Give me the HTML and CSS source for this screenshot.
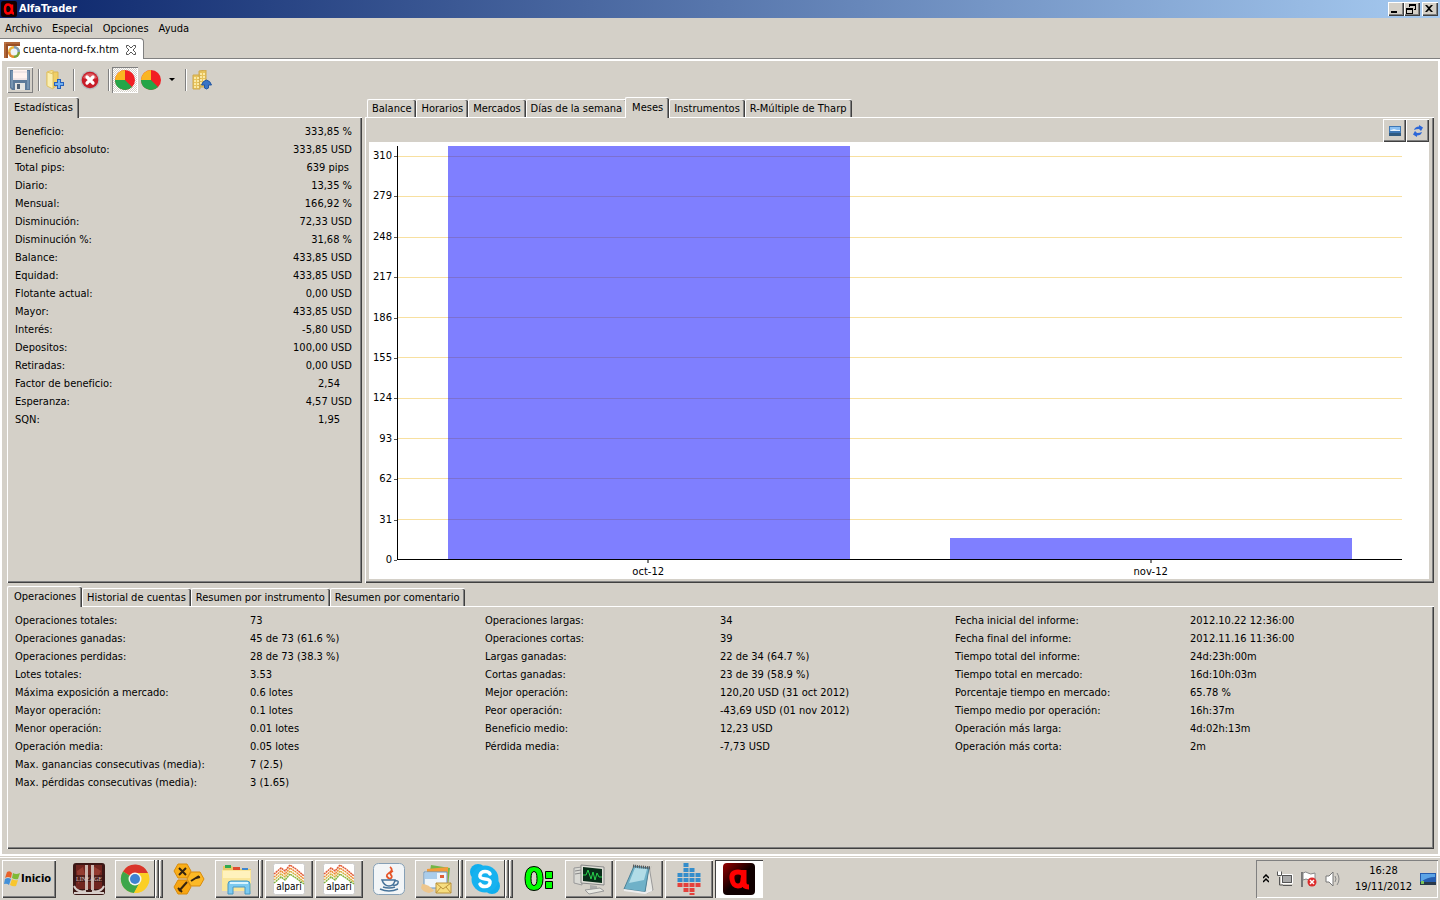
FILE: index.html
```html
<!DOCTYPE html>
<html lang="es">
<head>
  <meta charset="UTF-8">
  <title>AlfaTrader</title>
  <link rel="stylesheet" href="styles.css">
</head>
<body>

  <header class="titlebar">
    <svg class="title-icon" viewBox="0 0 16 16"><rect width="16" height="16" rx="2" fill="#100"/><path d="M11 3.5V10q0 2.500 2 2.500M11 8q-1 4.500-4 4.500T4 8t3-4.500T11 8" fill="none" stroke="#f00" stroke-width="2.500"/></svg>
    <h1>AlfaTrader</h1>
    <div class="window-buttons">
      <button aria-label="Minimizar"><svg viewBox="0 0 12 10"><path d="M2 7h6v2H2z"/></svg></button>
      <button aria-label="Restaurar"><svg viewBox="0 0 12 10"><path d="M4 0h7v6H9V5h1V2H5v1H4zM1 4h7v6H1zM2 6v3h5V6z" fill-rule="evenodd"/></svg></button>
      <button class="close" aria-label="Cerrar"><svg viewBox="0 0 12 10"><path d="M2 1h2l2 2 2-2h2L7 4.500 10 8H8L6 6 4 8H2l3-3.500z"/></svg></button>
    </div>
  </header>

  <nav class="menubar">
    <button>Archivo</button>
    <button>Especial</button>
    <button>Opciones</button>
    <button>Ayuda</button>
  </nav>

  <div class="file-tabs">
    <div class="file-tab">
      <svg class="icon16" viewBox="0 0 16 16"><path d="M0 0h16v4H4v12H0z" fill="#9a4f25"/><path d="M0 1h16M1 0v16" stroke="#c9814f"/><circle cx="10" cy="10" r="6" fill="#e9b53c"/><path d="M10 10V4a6 6 0 0 1 6 6z" fill="#7d9cb8"/><path d="M10 10h6a6 6 0 0 1-6 6z" fill="#78a43b"/><path d="M10 10v6a6 6 0 0 1-6-6z" fill="#e48a32"/><circle cx="10" cy="10" r="3.500" fill="#eef3f8"/></svg>
      <span>cuenta-nord-fx.htm</span>
      <button class="tab-close" aria-label="Cerrar pestaña"><svg viewBox="0 0 12 12"><path d="M1.500 1.500h2L6 4l2.500-2.500h2v2L8 6l2.500 2.500v2h-2L6 8l-2.500 2.500h-2v-2L4 6 1.500 3.500z" fill="#fff" stroke="#555"/></svg></button>
    </div>
  </div>

  <main class="workspace">
    <div class="toolbar">
      <button class="tool raised" aria-label="Guardar"><svg viewBox="0 0 20 20"><path d="M0 0h20v20H2l-2-2z" fill="#5c7a9a"/><path d="M1 1h2v17H2l-1-1zM17 1h2v18h-2z" fill="#7795b2"/><path d="M3 0h14v10H3z" fill="#fff3ef"/><path d="M3 2h14M3 9h14" stroke="#e2d8dc"/><path d="M5 13h10v7H5z" fill="#e4e4e2"/><path d="M7 14h3v5H7z" fill="#4f6175"/></svg></button>
      <span class="divider"></span>
      <button class="tool" aria-label="Añadir"><svg viewBox="0 0 20 20"><path d="M2 2l6-2v16l-6-1z" fill="#f7e08a" stroke="#e6c566"/><path d="M8 2h5v13l-5 3z" fill="#f1cf65" stroke="#d9b552"/><path d="M2 2l6 2v15l-6-3z" fill="#fbefb0" stroke="#dfc366"/><path d="M12 9h4v3h3v4h-3v3h-4v-3H9v-4h3z" fill="#2560bb"/><path d="M13 10h2v3h3v2h-3v3h-2v-3h-3v-2h3z" fill="#72b0f0"/></svg></button>
      <span class="divider"></span>
      <button class="tool" aria-label="Eliminar"><svg viewBox="0 0 20 20"><circle cx="10" cy="10" r="9.500" fill="#b7bbbd"/><circle cx="10" cy="10" r="8.300" fill="#c81d29"/><path d="M3 8a7.500 7.500 0 0 1 14 0q-7 3-14 0z" fill="#dd5a60"/><path d="M7 7l6 6m0-6l-6 6" stroke="#fff" stroke-width="3.200" stroke-linecap="round"/></svg></button>
      <span class="divider"></span>
      <button class="tool pressed" aria-label="Gráfico circular"><svg viewBox="0 0 20 20"><circle cx="10" cy="10" r="10" fill="#f21e23"/><path d="M10 10L17 17A10 10 0 0 1 0 10z" fill="#24a548"/><path d="M10 10H0A10 10 0 0 1 10 0z" fill="#fab521"/></svg></button>
      <button class="tool" aria-label="Tipo de gráfico"><svg viewBox="0 0 20 20"><circle cx="10" cy="10" r="10" fill="#f21e23"/><path d="M10 10L17 17A10 10 0 0 1 0 10z" fill="#24a548"/><path d="M10 10H0A10 10 0 0 1 10 0z" fill="#fab521"/></svg></button>
      <button class="drop" aria-label="Más gráficos"><svg viewBox="0 0 6 4"><path d="M0 0h6L3 3z"/></svg></button>
      <span class="divider"></span>
      <button class="tool" aria-label="Cuentas"><svg viewBox="0 0 20 20"><path d="M7 1l7-1v17H7zM1 5h7v14H1z" fill="#e7c35b" stroke="#cfa94c"/><path d="M9 3v12M12 3v12M3 7v11M6 7v11" stroke="#fae9a4" stroke-width="2" stroke-dasharray="2 1"/><path d="M14.500 10q4 1 5 5h-3v3q-2 2-4 0v-3h-3q1-4 5-5z" fill="#3974c5" stroke="#2457a1"/></svg></button>
    </div>

    <div class="upper">
      <section class="stats">
        <div class="tabs">
          <button class="tab selected">Estadísticas</button>
        </div>
        <div class="panel">
          <table class="stats-table">
            <tr><th>Beneficio:</th><td>333,85 %</td></tr>
            <tr><th>Beneficio absoluto:</th><td>333,85 USD</td></tr>
            <tr><th>Total pips:</th><td class="pips">639 pips</td></tr>
            <tr><th>Diario:</th><td>13,35 %</td></tr>
            <tr><th>Mensual:</th><td>166,92 %</td></tr>
            <tr><th>Disminución:</th><td>72,33 USD</td></tr>
            <tr><th>Disminución %:</th><td>31,68 %</td></tr>
            <tr><th>Balance:</th><td>433,85 USD</td></tr>
            <tr><th>Equidad:</th><td>433,85 USD</td></tr>
            <tr><th>Flotante actual:</th><td>0,00 USD</td></tr>
            <tr><th>Mayor:</th><td>433,85 USD</td></tr>
            <tr><th>Interés:</th><td>-5,80 USD</td></tr>
            <tr><th>Depositos:</th><td>100,00 USD</td></tr>
            <tr><th>Retiradas:</th><td>0,00 USD</td></tr>
            <tr><th>Factor de beneficio:</th><td class="plain">2,54</td></tr>
            <tr><th>Esperanza:</th><td>4,57 USD</td></tr>
            <tr><th>SQN:</th><td class="plain">1,95</td></tr>
          </table>
        </div>
      </section>

      <section class="graphs">
        <div class="tabs">
          <button class="tab">Balance</button>
          <button class="tab">Horarios</button>
          <button class="tab">Mercados</button>
          <button class="tab">Días de la semana</button>
          <button class="tab selected">Meses</button>
          <button class="tab">Instrumentos</button>
          <button class="tab">R-Múltiple de Tharp</button>
        </div>
        <div class="panel graph-panel">
          <div class="graph-tools">
            <button aria-label="Guardar imagen"><svg viewBox="0 0 12 12"><path d="M0 1h12v10H0z" fill="#3f78b5"/><path d="M1 2h10v4H1z" fill="#8cc0f2"/><path d="M2 5l3-1 3 1h3v1H1z" fill="#e5f2fd"/><path d="M0 8h12v3H0z" fill="#315b80"/></svg></button>
            <button aria-label="Actualizar"><svg viewBox="0 0 12 12"><path d="M2 5q1-3.500 5-3.500V0l4 2.500L9 6 7 4Q4 4 2 5zM10 7q-1 3.500-5 3.500V12L1 9.500 3 6l2 2q3 0 5-1z" fill="#2c67d8"/></svg></button>
          </div>
          <div class="chart">
            <div class="y-axis">
              <span></span>
              <span>310</span>
              <span>279</span>
              <span>248</span>
              <span>217</span>
              <span>186</span>
              <span>155</span>
              <span>124</span>
              <span>93</span>
              <span>62</span>
              <span>31</span>
              <span>0</span>
            </div>
            <div class="plot">
              <div class="gridlines">
                <i></i><i></i><i></i><i></i><i></i><i></i><i></i><i></i><i></i><i></i><i></i>
              </div>
              <div class="bars">
                <div class="month"><div class="bar" style="height: 100%"></div></div>
                <div class="month"><div class="bar" style="height: 5%"></div></div>
              </div>
            </div>
            <div class="x-axis">
              <span>oct-12</span>
              <span>nov-12</span>
            </div>
          </div>
        </div>
      </section>
    </div>

    <section class="operations">
      <div class="tabs">
        <button class="tab selected">Operaciones</button>
        <button class="tab">Historial de cuentas</button>
        <button class="tab">Resumen por instrumento</button>
        <button class="tab">Resumen por comentario</button>
      </div>
      <div class="panel operations-panel">
        <table class="ops-table">
          <tr><th>Operaciones totales:</th><td>73</td></tr>
          <tr><th>Operaciones ganadas:</th><td>45 de 73 (61.6 %)</td></tr>
          <tr><th>Operaciones perdidas:</th><td>28 de 73 (38.3 %)</td></tr>
          <tr><th>Lotes totales:</th><td>3.53</td></tr>
          <tr><th>Máxima exposición a mercado:</th><td>0.6 lotes</td></tr>
          <tr><th>Mayor operación:</th><td>0.1 lotes</td></tr>
          <tr><th>Menor operación:</th><td>0.01 lotes</td></tr>
          <tr><th>Operación media:</th><td>0.05 lotes</td></tr>
          <tr><th>Max. ganancias consecutivas (media):</th><td>7 (2.5)</td></tr>
          <tr><th>Max. pérdidas consecutivas (media):</th><td>3 (1.65)</td></tr>
        </table>
        <table class="ops-table">
          <tr><th>Operaciones largas:</th><td>34</td></tr>
          <tr><th>Operaciones cortas:</th><td>39</td></tr>
          <tr><th>Largas ganadas:</th><td>22 de 34 (64.7 %)</td></tr>
          <tr><th>Cortas ganadas:</th><td>23 de 39 (58.9 %)</td></tr>
          <tr><th>Mejor operación:</th><td>120,20 USD (31 oct 2012)</td></tr>
          <tr><th>Peor operación:</th><td>-43,69 USD (01 nov 2012)</td></tr>
          <tr><th>Beneficio medio:</th><td>12,23 USD</td></tr>
          <tr><th>Pérdida media:</th><td>-7,73 USD</td></tr>
        </table>
        <table class="ops-table">
          <tr><th>Fecha inicial del informe:</th><td>2012.10.22 12:36:00</td></tr>
          <tr><th>Fecha final del informe:</th><td>2012.11.16 11:36:00</td></tr>
          <tr><th>Tiempo total del informe:</th><td>24d:23h:00m</td></tr>
          <tr><th>Tiempo total en mercado:</th><td>16d:10h:03m</td></tr>
          <tr><th>Porcentaje tiempo en mercado:</th><td>65.78 %</td></tr>
          <tr><th>Tiempo medio por operación:</th><td>16h:37m</td></tr>
          <tr><th>Operación más larga:</th><td>4d:02h:13m</td></tr>
          <tr><th>Operación más corta:</th><td>2m</td></tr>
        </table>
      </div>
    </section>
  </main>

  <footer class="taskbar">
    <button class="start">
      <svg class="icon16" viewBox="0 0 16 16"><path d="M3 1q3-2 5 1L7 7Q4 5 1 7z" fill="#e8622a"/><path d="M9 2q3 2 7 0l-2 6q-3 1-6-1z" fill="#7fba35"/><path d="M1 8q3-2 6 0l-2 6q-2-2-5-1z" fill="#4390d8"/><path d="M8 8q3 2 6 1l-2 6q-3 1-6-1z" fill="#f8c62d"/></svg>
      Inicio
    </button>
    <div class="tasks">
      <button class="task flat" aria-label="Lineage II"><svg viewBox="0 0 32 32"><rect width="32" height="32" rx="3" fill="#3b1715"/><path d="M3 2h26v24H3z" fill="#70251f"/><path d="M4 8l6-4 2 8-7 9zM20 3l8 5-4 8-5 6z" fill="#943c31"/><path d="M0 12h32v7H0z" fill="#381514" opacity=".7"/><path d="M12 2h3v25h-3zM18 2h3v25h-3z" fill="#cbb5ae"/><path d="M1 23q3 7 12 5M31 23q-3 7-12 5M1 30h30" fill="none" stroke="#d7cdc9" stroke-width="2"/><text x="16" y="18" class="lineage-text">LINEAGE</text></svg></button>
      <button class="task" aria-label="Chrome"><svg viewBox="0 0 32 32"><circle cx="16" cy="16" r="14" fill="#fc3"/><path d="M16 16L4 8.500A14 14 0 0 1 29 10H16z" fill="#d9352b"/><path d="M4 8.500A14 14 0 0 0 15 30l6-11-5-3z" fill="#3da64a"/><path d="M15 30A14 14 0 0 0 29 10H16l5 9z" fill="#fbcf24"/><circle cx="16" cy="16" r="6.500" fill="#f5f5f2"/><circle cx="16" cy="16" r="5" fill="#3d82d2"/></svg><i class="stack"></i><i class="stack"></i></button>
      <button class="task flat" aria-label="Herramientas"><svg viewBox="0 0 32 32"><g stroke="#d98b0b"><path d="M5 1h9l4 7-4 7H5L1 8z" fill="#f9ae18"/><path d="M18 9h9l4 7-4 7h-9l-4-7z" fill="#fcb926"/><path d="M5 17h9l4 7-4 7H5l-4-7z" fill="#f7a511"/></g><path d="M6 5l7 7m0-7l-7 7M6 28l8-9M5 25l4 4M18 18l8-5M23 15l4-1" stroke="#352410" stroke-width="2"/></svg></button>
      <button class="task" aria-label="Explorador"><svg viewBox="0 0 32 32"><path d="M2 3h9l2 3h17v21H2z" fill="#e6c868"/><path d="M4 2h6v3H4z" fill="#2eaa50"/><path d="M12 4h7v3h-7z" fill="#e04b30"/><path d="M21 5h6v3h-6z" fill="#3d86cf"/><path d="M1 7h29v21H1z" fill="#fae69a"/><path d="M2 8h27v7H2z" fill="#fff2bc"/><path d="M7 31V21q0-3 3-3h16q3 0 3 3v10h-5v-7H12v7z" fill="#7ccaf0" stroke="#4698c4"/><path d="M9 20h18" stroke="#d9f5ff" stroke-width="2"/></svg><i class="stack"></i></button>
      <button class="task" aria-label="Alpari"><svg viewBox="0 0 32 32"><rect x=".5" y=".5" width="31" height="31" rx="2" fill="#fff" stroke="#ccc"/><g fill="none" stroke-width="1.500" stroke-dasharray="2 .5"><path d="M1 11l7-6 4 3 5-6 6 4 8 7" stroke="#e25a35"/><path d="M1 14l7-6 4 3 5-6 6 4 8 7" stroke="#ec8a34"/><path d="M1 17l7-6 4 3 5-6 6 4 8 7" stroke="#d7af3c"/><path d="M1 20l7-6 4 3 5-6 6 4 8 6" stroke="#85b43b"/></g><text x="16" y="27" class="alpari-text">alpari</text></svg></button>
      <button class="task" aria-label="Alpari"><svg viewBox="0 0 32 32"><rect x=".5" y=".5" width="31" height="31" rx="2" fill="#fff" stroke="#ccc"/><g fill="none" stroke-width="1.500" stroke-dasharray="2 .5"><path d="M1 11l7-6 4 3 5-6 6 4 8 7" stroke="#e25a35"/><path d="M1 14l7-6 4 3 5-6 6 4 8 7" stroke="#ec8a34"/><path d="M1 17l7-6 4 3 5-6 6 4 8 7" stroke="#d7af3c"/><path d="M1 20l7-6 4 3 5-6 6 4 8 6" stroke="#85b43b"/></g><text x="16" y="27" class="alpari-text">alpari</text></svg></button>
      <button class="task flat" aria-label="Java"><svg viewBox="0 0 32 32"><rect x=".5" y=".5" width="31" height="31" rx="5" fill="#f2f5f7" stroke="#86a0b6"/><path d="M17 4q4 3-1 6t1 6M20 8q-4 2-2 4t-1 4" fill="none" stroke="#e65427" stroke-width="1.800"/><path d="M9 17h13q-1 6-6 6t-7-6zM22 18q4-1 3 2t-5 2M10 24q6 2 12 0M7 26q9 4 18 0" fill="none" stroke="#47739a" stroke-width="1.500"/></svg></button>
      <button class="task" aria-label="Correo"><svg viewBox="0 0 32 32"><path d="M10 2l19 3-2 19L7 20z" fill="#72b646"/><path d="M6 6l21-2v18H6z" fill="#f19c3c"/><path d="M3 9h23v16H3z" fill="#eef5fb" stroke="#6596c4"/><path d="M4 10h12v6H4z" fill="#a9cdec"/><path d="M19 12h4v3h-4z" fill="#dd6038"/><path d="M1 21q7 0 12 7l-5 2q-6-1-8-5z" fill="#edc68d"/><path d="M15 20h15v10H15z" fill="#f6dd7f" stroke="#bd943c"/><path d="M15 20l7 6 8-6M15 30l5-6M30 30l-5-6" fill="none" stroke="#bd943c"/></svg><i class="stack"></i></button>
      <button class="task" aria-label="Skype"><svg viewBox="0 0 32 32"><circle cx="9" cy="9" r="8" fill="#10aeed"/><circle cx="23" cy="23" r="8" fill="#10aeed"/><circle cx="16" cy="16" r="13.500" fill="#16b2ef"/><path d="M21 11q-1-2.500-5-2.500t-5 3.500 5 4 5 4-5 3.500-5-2.500" fill="none" stroke="#fff" stroke-width="3.500" stroke-linecap="round"/></svg><i class="stack"></i><i class="stack"></i></button>
      <button class="task flat" aria-label="Contador"><svg viewBox="0 0 32 32"><g fill="#0f0" stroke="#000"><path d="M11 3.500q9 0 9 12t-9 12-9-12 9-12zM11 8.500q-3 0-3 7t3 7 3-7-3-7z" fill-rule="evenodd"/><path d="M22.500 8.500h7v7h-7zM22.500 18.500h7v7h-7z"/></g></svg></button>
      <button class="task" aria-label="Monitor"><svg viewBox="0 0 32 32"><path d="M1 5l8-1v18l-8-2z" fill="#d9d9d4" stroke="#999"/><path d="M2 8l6-1M2 11l6-1" stroke="#888"/><path d="M8 2l23 2v18L8 20z" fill="#e1e0d9" stroke="#888"/><path d="M10 4l19 2v14l-19-2z" fill="#092d19"/><path d="M10 12h3l2-5 3 9 2-7 2 8 2-7 2 4h3" fill="none" stroke="#28d24c"/><path d="M17 22l7 1v4h-7z" fill="#aaa"/><path d="M12 27l15-2 4 3-15 3z" fill="#e8e8e2" stroke="#999"/></svg></button>
      <button class="task" aria-label="Bloc de notas"><svg viewBox="0 0 32 32"><path d="M26 3l4 24-6 3-2-3z" fill="#e8e8e4" stroke="#999"/><path d="M11 3l15 2-4 24L1 26z" fill="#6fb1c8" stroke="#4d8298"/><path d="M12 5l12 1-3 11L6 20z" fill="#b1dce7"/><path d="M10 3l18 2" stroke="#555" stroke-width="3" stroke-dasharray="1 1"/><path d="M1 27l21 3 7-3" fill="none" stroke="#eee" stroke-width="2"/></svg></button>
      <button class="task" aria-label="Indicadores"><svg viewBox="0 0 32 32"><g fill="none" stroke-width="5" stroke-dasharray="4 1"><path d="M7 10v9M13 0v19M19 5v14M25 10v9" stroke="#348dcb"/><path d="M7 20v4M13 20v9M19 20v12M25 20v4" stroke="#e4413b"/></g></svg></button>
      <button class="task active" aria-label="AlfaTrader"><svg viewBox="0 0 32 32"><defs><linearGradient id="alfa-bg" x2="1" y2="1"><stop stop-color="#900"/><stop offset=".5" stop-color="#100"/></linearGradient></defs><rect width="32" height="32" rx="4" fill="url(#alfa-bg)"/><path d="M21 7v13q0 4 5 4M20 16q0 7-5 7t-6-7 6-7 5 7z" fill="none" stroke="#f00" stroke-width="5"/></svg></button>
    </div>
    <div class="tray">
      <svg class="chevrons" viewBox="0 0 6 9"><path d="M0 4l3-3 3 3M0 8l3-3 3 3" fill="none" stroke="#000" stroke-width="1.500"/></svg>
      <svg class="icon16" viewBox="0 0 16 16"><path d="M4.500 3.500h11v9h-11z" fill="#777" stroke="#fff"/><path d="M5.500 4.500h9v7h-9z" fill="#aaa" stroke="#555"/><path d="M6 14.500h9M2.500 6v8H6" stroke="#555" fill="none"/><path d="M.5.500v4h4v-4" stroke="#555" fill="#fff"/></svg>
      <svg class="icon16" viewBox="0 0 16 16"><path d="M1 1v15" stroke="#777" stroke-width="2"/><path d="M2 2q3-2 5 0t7 0v7q-3 2-6 0t-6 0z" fill="#fff" stroke="#888"/><circle cx="11" cy="11" r="4.500" fill="#dc2c2c"/><path d="M9 9l4 4m0-4l-4 4" stroke="#fff" stroke-width="1.500"/></svg>
      <svg class="icon16" viewBox="0 0 16 16"><path d="M1 5h3l4-4v14l-4-4H1z" fill="#fff" stroke="#777"/><path d="M10 5q2 3 0 6M12 2q4 6 0 12" fill="none" stroke="#888"/></svg>
      <div class="clock">
        <span>16:28</span>
        <span>19/11/2012</span>
      </div>
      <svg class="icon16" viewBox="0 0 16 16"><path d="M0 2h16v11H0z" fill="#255cae"/><path d="M1 3h14v3q-8 0-14 5z" fill="#5ca4e6"/><path d="M0 11h16v3H0z" fill="#283849"/><path d="M1 10h3v3H1z" fill="#7cc35b"/></svg>
    </div>
  </footer>

</body>
</html>
```
FILE: styles.css
```css
:root {
  --face: #d4d0c8;
  --light: #ffffff;
  --shadow: #808080;
  --dark: #404040;
  --grid: #f8e0a0;
}

* {
  box-sizing: border-box;
}

body {
  display: flex;
  flex-direction: column;
  min-height: 100vh;
  margin: 0;
  background: var(--face);
  color: #000;
  font-family: "DejaVu Sans Condensed", Tahoma, sans-serif;
  font-size: 11px;
  line-height: 14px;
}

button {
  padding: 0;
  border: 0;
  background: none;
  color: inherit;
  font: inherit;
}

svg {
  display: block;
}

.icon16 {
  width: 16px;
  height: 16px;
}

/* window title and menus */
.titlebar {
  display: flex;
  align-items: center;
  gap: 2px;
  height: 18px;
  padding: 0 2px 0 1px;
  background: linear-gradient(to right, #0a246a, #a6caf0);
}

.title-icon {
  width: 16px;
  height: 16px;
}

.titlebar h1 {
  margin: 0;
  color: #fff;
  font-size: 11px;
}

.window-buttons {
  display: flex;
  margin-left: auto;
}

.window-buttons button {
  width: 16px;
  height: 14px;
  padding: 1px;
  background: var(--face);
  box-shadow: inset 1px 1px var(--light), inset -1px -1px var(--dark), inset -2px -2px var(--shadow);
}

.window-buttons svg {
  width: 12px;
  height: 10px;
}

.window-buttons .close {
  margin-left: 2px;
}

.menubar {
  display: flex;
  gap: 10px;
  height: 20px;
  padding: 2px 5px 0;
}

.file-tabs {
  height: 21px;
  border-bottom: 1px solid var(--shadow);
}

.file-tab {
  display: inline-flex;
  align-items: center;
  gap: 3px;
  height: 21px;
  padding: 1px 6px 0 4px;
  border: 1px solid var(--shadow);
  border-width: 1px 1px 0 0;
  border-radius: 0 4px 0 0;
  background: #fff;
}

.tab-close {
  margin-left: 3px;
}

.tab-close svg {
  width: 12px;
  height: 12px;
}

.workspace {
  flex: 1;
  display: flex;
  flex-direction: column;
  padding: 2px 4px 5px 5px;
  border: 2px solid #fff;
}

/* toolbar */
.toolbar {
  display: flex;
  align-items: center;
  height: 33px;
}

.tool {
  display: grid;
  place-items: center;
  width: 26px;
  height: 26px;
}

.tool svg {
  width: 20px;
  height: 20px;
}

.raised {
  box-shadow: inset 1px 1px var(--light), inset -1px -1px var(--shadow);
}

.pressed {
  background: repeating-conic-gradient(#fff 0 25%, var(--face) 0 50%) 0 0 / 2px 2px;
  box-shadow: inset 1px 1px var(--shadow), inset -1px -1px var(--light);
}

.drop {
  padding: 0 5px;
}

.drop svg {
  width: 6px;
  height: 4px;
}

.divider {
  width: 2px;
  height: 22px;
  margin: 0 2px 0 5px;
  border-left: 1px solid var(--shadow);
  border-right: 1px solid var(--light);
}

/* tab folders */
.tabs {
  display: flex;
  align-items: flex-end;
  height: 21px;
  padding-left: 2px;
}

.tab {
  height: 18px;
  padding: 1px 5px 0 4px;
  border-top: 1px solid var(--light);
  border-left: 1px solid var(--light);
  border-radius: 2px 2px 0 0;
  box-shadow: inset -1px 0 var(--dark), inset -2px 0 var(--shadow);
  white-space: nowrap;
}

.tab.selected {
  z-index: 1;
  height: 21px;
  margin: 0 0 -1px -2px;
  padding: 0 6px 1px;
  background: var(--face);
}

.panel {
  flex: 1;
  border-top: 1px solid var(--light);
  border-left: 1px solid var(--light);
  box-shadow: inset -1px -1px var(--dark), inset -2px -2px var(--shadow);
}

.upper {
  flex: 1;
  display: grid;
  grid-template-columns: minmax(0, 355px) 1fr;
  gap: 3px;
}

.stats,
.graphs,
.operations {
  display: flex;
  flex-direction: column;
}

.stats .panel {
  padding: 5px 10px 4px 7px;
}

table {
  border-collapse: collapse;
}

th,
td {
  height: 18px;
  padding: 0;
  font-weight: normal;
  text-align: left;
}

.stats-table {
  width: 100%;
}

.stats-table td {
  text-align: right;
}

.stats-table .pips {
  padding-right: 3px;
}

.stats-table .plain {
  padding-right: 12px;
}

/* monthly chart */
.graph-panel {
  display: flex;
  flex-direction: column;
  padding: 1px 5px 4px 3px;
}

.graph-tools {
  display: flex;
  justify-content: flex-end;
}

.graph-tools button {
  display: grid;
  place-items: center;
  width: 23px;
  height: 23px;
  box-shadow: inset 1px 1px var(--light), inset -1px -1px var(--dark), inset -2px -2px var(--shadow);
}

.graph-tools svg {
  width: 12px;
  height: 12px;
}

.chart {
  flex: 1;
  display: grid;
  grid-template-columns: 28px 1fr;
  grid-template-rows: 1fr 18px;
  padding: 4px 27px 1px 0;
  background: #fff;
  font-family: "DejaVu Sans", Verdana, sans-serif;
  font-size: 10px;
  line-height: 12px;
}

.y-axis,
.gridlines {
  display: grid;
  grid-template-rows: 10px repeat(10, 1fr) 0;
}

.y-axis span {
  display: flex;
  justify-content: flex-end;
  gap: 2px;
  height: 12px;
  margin-top: -6px;
}

.y-axis span:not(:empty)::after {
  content: "";
  width: 3px;
  height: 1px;
  margin-top: 6px;
  background: #555;
}

.plot {
  display: grid;
  border-left: 1px solid #000;
  border-bottom: 1px solid #000;
}

.gridlines,
.bars {
  grid-area: 1 / 1;
}

.gridlines i + i {
  border-top: 1px solid var(--grid);
}

.bars {
  display: flex;
}

.month {
  flex: 1;
  display: flex;
  align-items: flex-end;
  justify-content: center;
}

.bar {
  width: 80%;
  background: rgba(0, 0, 255, 0.5);
}

.x-axis {
  grid-column: 2;
  display: flex;
}

.x-axis span {
  flex: 1;
  text-align: center;
}

.x-axis span::before {
  content: "";
  display: block;
  width: 2px;
  height: 3px;
  margin: 0 auto 3px;
  background: var(--shadow);
}

/* operations summary */
.operations {
  height: 264px;
  margin-top: 2px;
}

.operations-panel {
  display: grid;
  grid-template-columns: repeat(3, 1fr);
  align-items: start;
  padding: 5px 9px 4px 7px;
}

.ops-table {
  width: 100%;
  table-layout: fixed;
}

/* taskbar */
.taskbar {
  display: flex;
  align-items: center;
  height: 44px;
  padding: 0 2px;
  border-top: 1px solid var(--face);
  box-shadow: inset 0 1px var(--light);
}

.start {
  display: flex;
  align-items: center;
  gap: 1px;
  width: 54px;
  height: 38px;
  padding-left: 2px;
  font-weight: bold;
  box-shadow: inset 1px 1px var(--light), inset -1px -1px var(--dark), inset -2px -2px var(--shadow);
}

.tasks {
  display: flex;
  gap: 2px;
  margin-left: 9px;
}

.task {
  display: flex;
  align-items: center;
  width: 48px;
  height: 38px;
  box-shadow: inset 1px 1px var(--light), inset -1px -1px var(--dark), inset -2px -2px var(--shadow);
}

.task svg {
  width: 32px;
  height: 32px;
  margin: auto;
}

.task.flat {
  box-shadow: none;
}

.task.active {
  background: #fff;
  box-shadow: inset 1px 1px var(--dark), inset -1px -1px var(--light);
}

/* edges of the other windows grouped behind a task */
.stack {
  width: 4px;
  height: 38px;
  border-left: 1px solid var(--dark);
  box-shadow: inset 1px 0 var(--light), inset -1px -1px var(--shadow);
}

.stack:last-child {
  width: 5px;
  box-shadow: inset 1px 0 var(--light), inset -1px -1px var(--dark), inset -2px -2px var(--shadow);
}

.alpari-text {
  font: 10px "DejaVu Sans Condensed", sans-serif;
  text-anchor: middle;
}

.lineage-text {
  fill: #d8c8c3;
  font: 6px "Liberation Serif", serif;
  text-anchor: middle;
}

.tray {
  display: flex;
  align-items: center;
  gap: 8px;
  height: 38px;
  margin-left: auto;
  padding: 0 2px 0 7px;
  box-shadow: inset 1px 1px var(--shadow), inset -1px -1px var(--light);
}

.chevrons {
  width: 6px;
  height: 9px;
}

.clock {
  display: flex;
  flex-direction: column;
  gap: 2px;
  margin-left: 6px;
  text-align: center;
}
```
